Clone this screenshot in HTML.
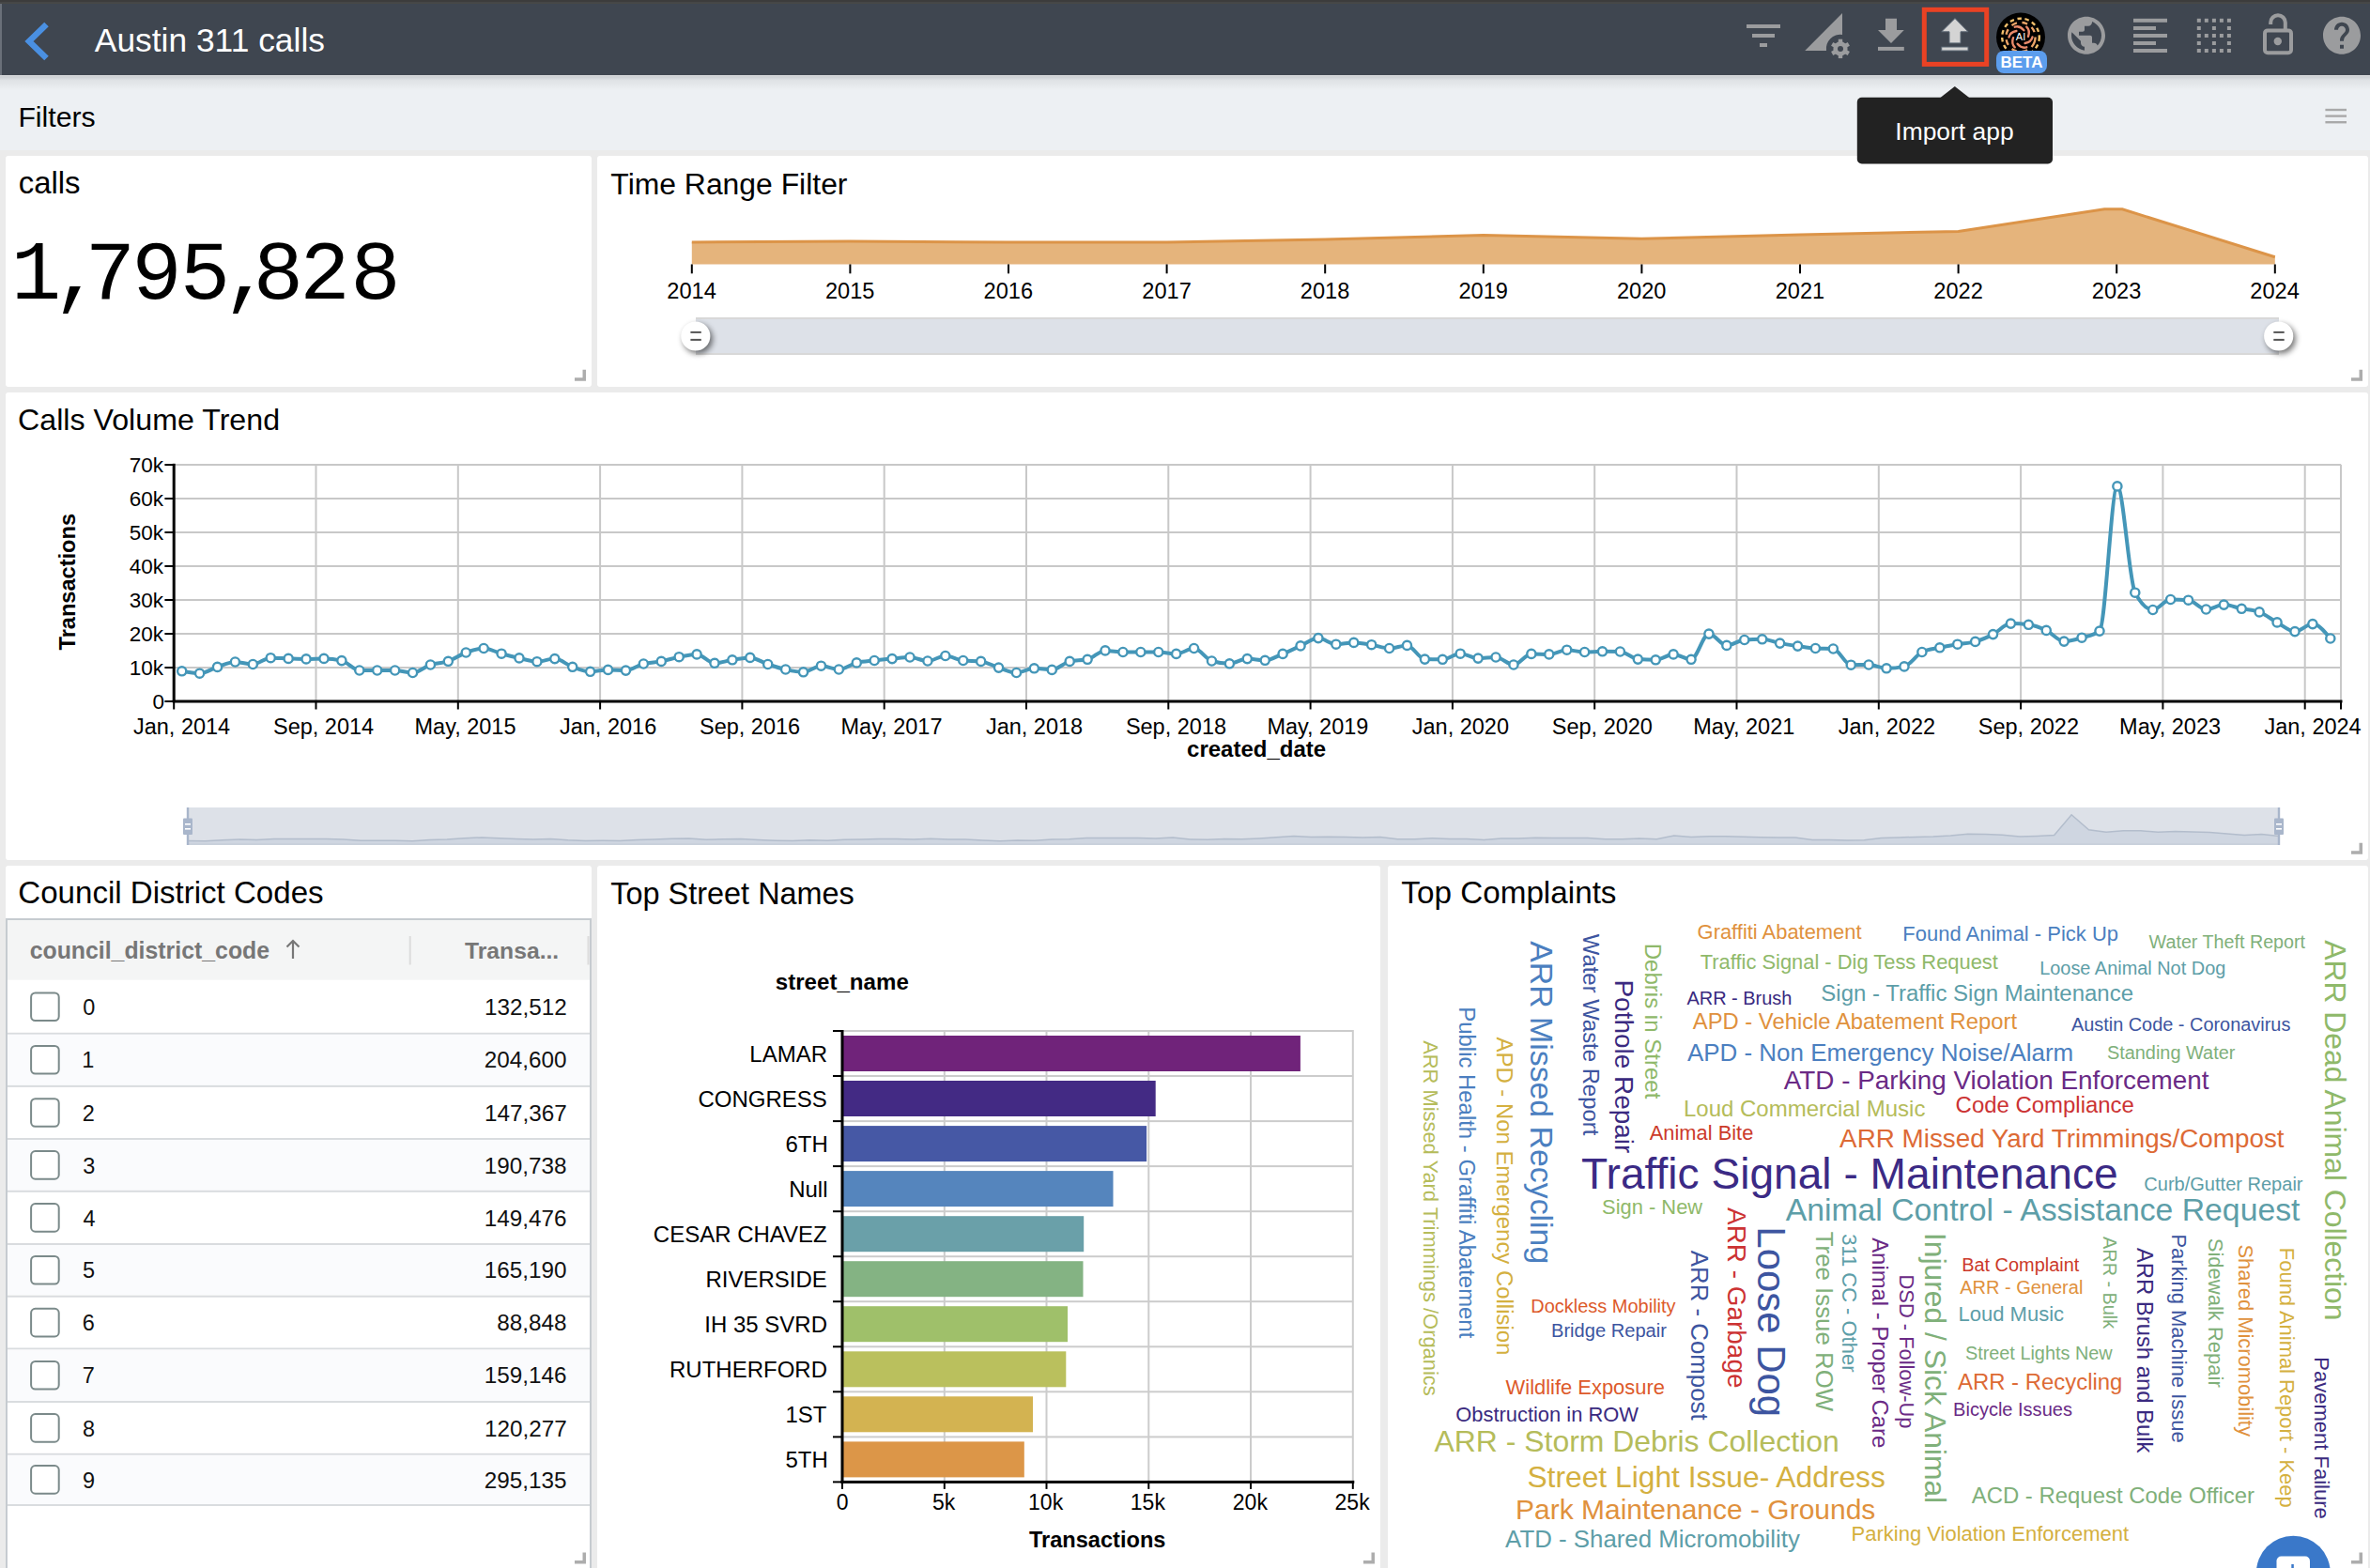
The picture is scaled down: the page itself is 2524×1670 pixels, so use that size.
<!DOCTYPE html>
<html><head><meta charset="utf-8"><title>Austin 311 calls</title>
<style>html,body{margin:0;padding:0;background:#ebebeb;overflow:hidden}svg{display:block}text{white-space:pre}</style></head>
<body>
<svg width="2524" height="1670" viewBox="0 0 2524 1670">
<defs>
<linearGradient id="hshadow" x1="0" y1="0" x2="0" y2="1"><stop offset="0" stop-color="#c2c6ca"/><stop offset="0.35" stop-color="#dfe2e5"/><stop offset="1" stop-color="#edf0f3"/></linearGradient>
<filter id="blur4" x="-50%" y="-50%" width="200%" height="200%"><feGaussianBlur stdDeviation="3"/></filter>
</defs>
<rect x="0" y="0" width="2524" height="1670" fill="#ebebeb"/>
<rect x="0" y="80" width="2524" height="80" fill="#edf0f3"/>
<rect x="0" y="80" width="2524" height="16" fill="url(#hshadow)"/>
<rect x="0" y="80" width="2524" height="1.5" fill="#d5d7d9"/>
<rect x="0" y="0" width="2524" height="80" fill="#3f4650"/>
<rect x="0" y="0" width="2524" height="2.2" fill="#3c3c3c"/><rect x="0" y="2.2" width="2524" height="1.8" fill="#474846"/><rect x="0" y="4" width="2" height="76" fill="#6a7079"/>
<path d="M49.5,26 L31,44 L49.5,62" fill="none" stroke="#4a90e2" stroke-width="6.5" stroke-linejoin="miter" stroke-linecap="butt"/>
<text x="100.80" y="54.90" font-family="Liberation Sans" font-size="35.39" fill="#ffffff">Austin 311 calls</text>
<rect x="1860" y="26" width="36" height="4" fill="#9b9c9e"/><rect x="1866" y="36" width="24" height="4" fill="#9b9c9e"/><rect x="1874" y="46" width="8" height="4" fill="#9b9c9e"/>
<path d="M1922.2,53.9 L1962,14 L1962,37 A15,15 0 0 0 1945,53.9 Z" fill="#9b9c9e"/>
<circle cx="1960" cy="51.9" r="7.6" fill="#9b9c9e"/>
<rect x="1957.8" y="41.7" width="4.4" height="5" fill="#9b9c9e" transform="rotate(0 1960 51.9)"/>
<rect x="1957.8" y="41.7" width="4.4" height="5" fill="#9b9c9e" transform="rotate(60 1960 51.9)"/>
<rect x="1957.8" y="41.7" width="4.4" height="5" fill="#9b9c9e" transform="rotate(120 1960 51.9)"/>
<rect x="1957.8" y="41.7" width="4.4" height="5" fill="#9b9c9e" transform="rotate(180 1960 51.9)"/>
<rect x="1957.8" y="41.7" width="4.4" height="5" fill="#9b9c9e" transform="rotate(240 1960 51.9)"/>
<rect x="1957.8" y="41.7" width="4.4" height="5" fill="#9b9c9e" transform="rotate(300 1960 51.9)"/>
<circle cx="1960" cy="51.9" r="3" fill="#3f4650"/>
<path d="M2008,19.8 H2020 V32.1 H2027.8 L2014,45.9 L2000,32.1 H2008 Z" fill="#9b9c9e"/><rect x="2000" y="49.9" width="27.8" height="4" fill="#9b9c9e"/>
<rect x="2049.3" y="10.3" width="66.4" height="58.1" fill="none" stroke="#ea4224" stroke-width="5"/>
<path d="M2082,19.6 L2096,33.8 H2088 V45.9 H2076 V33.8 H2067.7 Z" fill="#d4d4d4" stroke="#5a6673" stroke-width="1"/><rect x="2067.7" y="50" width="28.3" height="4" fill="#d4d4d4" stroke="#5a6673" stroke-width="1"/>
<circle cx="2152" cy="39.5" r="26" fill="#000"/>
<circle cx="2152" cy="39.5" r="19.8" fill="none" stroke="#f3c06c" stroke-width="2.4" stroke-dasharray="4.5 3.6"/>
<circle cx="2152" cy="39.5" r="15.6" fill="none" stroke="#eba467" stroke-width="2.4" stroke-dasharray="6 5.5" transform="rotate(20 2152 39.5)"/>
<path d="M2164.50,39.50 Q2163.33,44.78 2156.59,46.05" fill="none" stroke="#e98a6a" stroke-width="2.4" stroke-linecap="round"/>
<path d="M2158.25,50.33 Q2153.09,51.95 2148.62,46.75" fill="none" stroke="#e98a6a" stroke-width="2.4" stroke-linecap="round"/>
<path d="M2145.75,50.33 Q2141.76,46.67 2144.03,40.20" fill="none" stroke="#e98a6a" stroke-width="2.4" stroke-linecap="round"/>
<path d="M2139.50,39.50 Q2140.67,34.22 2147.41,32.95" fill="none" stroke="#e98a6a" stroke-width="2.4" stroke-linecap="round"/>
<path d="M2145.75,28.67 Q2150.91,27.05 2155.38,32.25" fill="none" stroke="#e98a6a" stroke-width="2.4" stroke-linecap="round"/>
<path d="M2158.25,28.67 Q2162.24,32.33 2159.97,38.80" fill="none" stroke="#e98a6a" stroke-width="2.4" stroke-linecap="round"/>
<text x="2152" y="43.3" font-family="Liberation Sans" font-size="11" fill="#fff" text-anchor="middle">AI</text>
<rect x="2126" y="54" width="54" height="24" rx="8" fill="#5c9ded"/>
<text x="2153" y="72" font-family="Liberation Sans" font-weight="bold" font-size="17" fill="#fff" text-anchor="middle">BETA</text>
<g transform="translate(2198,13.8) scale(2)" fill="#9b9c9e"><path d="M12 2C6.48 2 2 6.48 2 12s4.48 10 10 10 10-4.48 10-10S17.52 2 12 2zm-1 17.93c-3.95-.49-7-3.85-7-7.93 0-.62.08-1.21.21-1.79L9 15v1c0 1.1.9 2 2 2v1.93zm6.9-2.54c-.26-.81-1-1.39-1.9-1.39h-1v-3c0-.55-.45-1-1-1H8v-2h2c.55 0 1-.45 1-1V7h2c1.1 0 2-.9 2-2v-.41c2.93 1.19 5 4.06 5 7.41 0 2.08-.8 3.970-2.1 5.39z"/></g>
<rect x="2272" y="19.8" width="36" height="4" fill="#9b9c9e"/>
<rect x="2272" y="28" width="24" height="4" fill="#9b9c9e"/>
<rect x="2272" y="36" width="36" height="4" fill="#9b9c9e"/>
<rect x="2272" y="44" width="24" height="4" fill="#9b9c9e"/>
<rect x="2272" y="52" width="36" height="4" fill="#9b9c9e"/>
<rect x="2339.8" y="19.8" width="4" height="4" fill="#9b9c9e"/>
<rect x="2347.8" y="19.8" width="4" height="4" fill="#9b9c9e"/>
<rect x="2355.9" y="19.8" width="4" height="4" fill="#9b9c9e"/>
<rect x="2363.9" y="19.8" width="4" height="4" fill="#9b9c9e"/>
<rect x="2371.9" y="19.8" width="4" height="4" fill="#9b9c9e"/>
<rect x="2339.8" y="28" width="4" height="4" fill="#9b9c9e"/>
<rect x="2355.9" y="28" width="4" height="4" fill="#9b9c9e"/>
<rect x="2371.9" y="28" width="4" height="4" fill="#9b9c9e"/>
<rect x="2339.8" y="36" width="4" height="4" fill="#9b9c9e"/>
<rect x="2347.8" y="36" width="4" height="4" fill="#9b9c9e"/>
<rect x="2355.9" y="36" width="4" height="4" fill="#9b9c9e"/>
<rect x="2363.9" y="36" width="4" height="4" fill="#9b9c9e"/>
<rect x="2371.9" y="36" width="4" height="4" fill="#9b9c9e"/>
<rect x="2339.8" y="44" width="4" height="4" fill="#9b9c9e"/>
<rect x="2355.9" y="44" width="4" height="4" fill="#9b9c9e"/>
<rect x="2371.9" y="44" width="4" height="4" fill="#9b9c9e"/>
<rect x="2339.8" y="52" width="4" height="4" fill="#9b9c9e"/>
<rect x="2347.8" y="52" width="4" height="4" fill="#9b9c9e"/>
<rect x="2355.9" y="52" width="4" height="4" fill="#9b9c9e"/>
<rect x="2363.9" y="52" width="4" height="4" fill="#9b9c9e"/>
<rect x="2371.9" y="52" width="4" height="4" fill="#9b9c9e"/>
<path d="M2418.2,26 V24 A7.8,7.8 0 0 1 2433.8,24 V32" fill="none" stroke="#9b9c9e" stroke-width="4"/>
<rect x="2412" y="32.4" width="28" height="23.9" rx="3" fill="none" stroke="#9b9c9e" stroke-width="4"/>
<circle cx="2425.8" cy="44" r="4.2" fill="#9b9c9e"/>
<g transform="translate(2470,13.8) scale(2)" fill="#9b9c9e"><path d="M12 2C6.48 2 2 6.48 2 12s4.48 10 10 10 10-4.48 10-10S17.52 2 12 2zm1 17h-2v-2h2v2zm2.07-7.75l-.9.92C13.45 12.9 13 13.5 13 15h-2v-.5c0-1.1.45-2.1 1.17-2.830l1.24-1.26c.37-.36.59-.86.59-1.410 0-1.1-.9-2-2-2s-2 .9-2 2H8c0-2.21 1.79-4 4-4s4 1.79 4 4c0 .88-.36 1.68-.93 2.25z"/></g>
<text x="19.38" y="135.00" font-family="Liberation Sans" font-size="30.24" fill="#000">Filters</text>
<rect x="2476.4" y="115.8" width="22.6" height="2.4" fill="#a9a9a9"/><rect x="2476.4" y="122.4" width="22.6" height="2.4" fill="#a9a9a9"/><rect x="2476.4" y="129" width="22.6" height="2.4" fill="#a9a9a9"/>
<rect x="6" y="166" width="624" height="246" rx="3" fill="#fff"/>
<rect x="636" y="166" width="1886" height="246" rx="3" fill="#fff"/>
<rect x="6" y="418" width="2516" height="498" rx="3" fill="#fff"/>
<rect x="6" y="922" width="624" height="758" rx="3" fill="#fff"/>
<rect x="636" y="922" width="834" height="758" rx="3" fill="#fff"/>
<rect x="1478" y="922" width="1044" height="758" rx="3" fill="#fff"/>
<text x="19.68" y="206.00" font-family="Liberation Sans" font-size="32.95" fill="#000">calls</text>
<text x="11.76" y="318.30" font-family="Liberation Mono" font-size="89.00" fill="#000">1</text>
<text x="55.73" y="318.30" font-family="Liberation Mono" font-size="89.00" fill="#000">,</text>
<text x="90.70" y="318.30" font-family="Liberation Mono" font-size="89.00" fill="#000">7</text>
<text x="140.20" y="318.30" font-family="Liberation Mono" font-size="89.00" fill="#000">9</text>
<text x="191.70" y="318.30" font-family="Liberation Mono" font-size="89.00" fill="#000">5</text>
<text x="236.73" y="318.30" font-family="Liberation Mono" font-size="89.00" fill="#000">,</text>
<text x="269.80" y="318.30" font-family="Liberation Mono" font-size="89.00" fill="#000">8</text>
<text x="319.30" y="318.30" font-family="Liberation Mono" font-size="89.00" fill="#000">2</text>
<text x="373.20" y="318.30" font-family="Liberation Mono" font-size="89.00" fill="#000">8</text>
<path d="M612,404.05 H622.25 V393.8" fill="none" stroke="#adadad" stroke-width="3.5"/>
<text x="650.36" y="206.50" font-family="Liberation Sans" font-size="31.89" fill="#000">Time Range Filter</text>
<path d="M736.8,258.0 L905.4,257.0 L1074.0,258.0 L1242.6,258.0 L1411.2,255.0 L1579.8,250.5 L1748.4,254.3 L1917.0,250.0 L2085.6,246.5 L2241.2,222.8 L2260.2,222.8 L2422.8,273.7 L2422.8,281.5 L736.8,281.5 Z" fill="#e5b47c"/>
<path d="M736.8,258.0 L905.4,257.0 L1074.0,258.0 L1242.6,258.0 L1411.2,255.0 L1579.8,250.5 L1748.4,254.3 L1917.0,250.0 L2085.6,246.5 L2241.2,222.8 L2260.2,222.8 L2422.8,273.7" fill="none" stroke="#dc9448" stroke-width="3"/>
<rect x="735.8" y="281.5" width="2" height="9.8" fill="#000"/>
<text x="710.27" y="317.80" font-family="Liberation Sans" font-size="23.60" fill="#000">2014</text>
<rect x="904.4" y="281.5" width="2" height="9.8" fill="#000"/>
<text x="878.99" y="317.80" font-family="Liberation Sans" font-size="23.60" fill="#000">2015</text>
<rect x="1073.0" y="281.5" width="2" height="9.8" fill="#000"/>
<text x="1047.59" y="317.80" font-family="Liberation Sans" font-size="23.60" fill="#000">2016</text>
<rect x="1241.6" y="281.5" width="2" height="9.8" fill="#000"/>
<text x="1216.30" y="317.80" font-family="Liberation Sans" font-size="23.60" fill="#000">2017</text>
<rect x="1410.2" y="281.5" width="2" height="9.8" fill="#000"/>
<text x="1384.79" y="317.80" font-family="Liberation Sans" font-size="23.60" fill="#000">2018</text>
<rect x="1578.8" y="281.5" width="2" height="9.8" fill="#000"/>
<text x="1553.50" y="317.80" font-family="Liberation Sans" font-size="23.60" fill="#000">2019</text>
<rect x="1747.4" y="281.5" width="2" height="9.8" fill="#000"/>
<text x="1721.99" y="317.80" font-family="Liberation Sans" font-size="23.60" fill="#000">2020</text>
<rect x="1916.0" y="281.5" width="2" height="9.8" fill="#000"/>
<text x="1890.70" y="317.80" font-family="Liberation Sans" font-size="23.60" fill="#000">2021</text>
<rect x="2084.6" y="281.5" width="2" height="9.8" fill="#000"/>
<text x="2059.30" y="317.80" font-family="Liberation Sans" font-size="23.60" fill="#000">2022</text>
<rect x="2253.2" y="281.5" width="2" height="9.8" fill="#000"/>
<text x="2227.79" y="317.80" font-family="Liberation Sans" font-size="23.60" fill="#000">2023</text>
<rect x="2421.8" y="281.5" width="2" height="9.8" fill="#000"/>
<text x="2396.27" y="317.80" font-family="Liberation Sans" font-size="23.60" fill="#000">2024</text>
<rect x="741" y="338" width="1686" height="40" fill="#d8d8d8"/><rect x="741" y="340" width="1686" height="36" fill="#dde1e8"/>
<circle cx="743.3" cy="361" r="15.6" fill="#000" opacity="0.55" filter="url(#blur4)"/>
<circle cx="740.8" cy="358" r="15.6" fill="#fff"/>
<rect x="735.4" y="352.9" width="11.4" height="2" fill="#555"/><rect x="735.4" y="360.9" width="11.4" height="2" fill="#555"/>
<circle cx="2429.2" cy="361" r="15.6" fill="#000" opacity="0.55" filter="url(#blur4)"/>
<circle cx="2426.7" cy="358" r="15.6" fill="#fff"/>
<rect x="2421.2999999999997" y="352.9" width="11.4" height="2" fill="#555"/><rect x="2421.2999999999997" y="360.9" width="11.4" height="2" fill="#555"/>
<path d="M2504,404.05 H2514.25 V393.8" fill="none" stroke="#adadad" stroke-width="3.5"/>
<text x="19.09" y="457.70" font-family="Liberation Sans" font-size="32.19" fill="#000">Calls Volume Trend</text>
<rect x="185.2" y="710.0" width="2307.8" height="2" fill="#c8c8c8"/>
<rect x="185.2" y="674.0" width="2307.8" height="2" fill="#c8c8c8"/>
<rect x="185.2" y="638.0" width="2307.8" height="2" fill="#c8c8c8"/>
<rect x="185.2" y="602.0" width="2307.8" height="2" fill="#c8c8c8"/>
<rect x="185.2" y="566.0" width="2307.8" height="2" fill="#c8c8c8"/>
<rect x="185.2" y="530.0" width="2307.8" height="2" fill="#c8c8c8"/>
<rect x="185.2" y="494.0" width="2307.8" height="2" fill="#c8c8c8"/>
<rect x="184.2" y="494.8" width="2" height="252.2" fill="#c8c8c8"/>
<rect x="335.5" y="494.8" width="2" height="252.2" fill="#c8c8c8"/>
<rect x="486.8" y="494.8" width="2" height="252.2" fill="#c8c8c8"/>
<rect x="638.1" y="494.8" width="2" height="252.2" fill="#c8c8c8"/>
<rect x="789.4" y="494.8" width="2" height="252.2" fill="#c8c8c8"/>
<rect x="940.7" y="494.8" width="2" height="252.2" fill="#c8c8c8"/>
<rect x="1092.0" y="494.8" width="2" height="252.2" fill="#c8c8c8"/>
<rect x="1243.3" y="494.8" width="2" height="252.2" fill="#c8c8c8"/>
<rect x="1394.6" y="494.8" width="2" height="252.2" fill="#c8c8c8"/>
<rect x="1545.9" y="494.8" width="2" height="252.2" fill="#c8c8c8"/>
<rect x="1697.2" y="494.8" width="2" height="252.2" fill="#c8c8c8"/>
<rect x="1848.5" y="494.8" width="2" height="252.2" fill="#c8c8c8"/>
<rect x="1999.8" y="494.8" width="2" height="252.2" fill="#c8c8c8"/>
<rect x="2151.1" y="494.8" width="2" height="252.2" fill="#c8c8c8"/>
<rect x="2302.4" y="494.8" width="2" height="252.2" fill="#c8c8c8"/>
<rect x="2453.7" y="494.8" width="2" height="252.2" fill="#c8c8c8"/>
<rect x="2492.0" y="494.8" width="2" height="252.2" fill="#c8c8c8"/>
<rect x="183.7" y="493.8" width="3" height="253.2" fill="#000"/>
<rect x="183.7" y="745.5" width="2310.8" height="3" fill="#000"/>
<rect x="175.4" y="746.0" width="10" height="2" fill="#000"/>
<text x="162.50" y="754.60" font-family="Liberation Sans" font-size="22.50" fill="#000">0</text>
<rect x="175.4" y="710.0" width="10" height="2" fill="#000"/>
<text x="137.70" y="718.60" font-family="Liberation Sans" font-size="22.50" fill="#000">10k</text>
<rect x="175.4" y="674.0" width="10" height="2" fill="#000"/>
<text x="137.70" y="682.60" font-family="Liberation Sans" font-size="22.50" fill="#000">20k</text>
<rect x="175.4" y="638.0" width="10" height="2" fill="#000"/>
<text x="137.70" y="646.60" font-family="Liberation Sans" font-size="22.50" fill="#000">30k</text>
<rect x="175.4" y="602.0" width="10" height="2" fill="#000"/>
<text x="137.70" y="610.60" font-family="Liberation Sans" font-size="22.50" fill="#000">40k</text>
<rect x="175.4" y="566.0" width="10" height="2" fill="#000"/>
<text x="137.70" y="574.60" font-family="Liberation Sans" font-size="22.50" fill="#000">50k</text>
<rect x="175.4" y="530.0" width="10" height="2" fill="#000"/>
<text x="137.70" y="538.60" font-family="Liberation Sans" font-size="22.50" fill="#000">60k</text>
<rect x="175.4" y="494.0" width="10" height="2" fill="#000"/>
<text x="137.70" y="502.60" font-family="Liberation Sans" font-size="22.50" fill="#000">70k</text>
<rect x="184.2" y="747" width="2" height="8.5" fill="#000"/>
<text x="141.98" y="781.70" font-family="Liberation Sans" font-size="23.50" fill="#000">Jan, 2014</text>
<rect x="335.5" y="747" width="2" height="8.5" fill="#000"/>
<text x="290.96" y="781.70" font-family="Liberation Sans" font-size="23.50" fill="#000">Sep, 2014</text>
<rect x="486.8" y="747" width="2" height="8.5" fill="#000"/>
<text x="441.49" y="781.70" font-family="Liberation Sans" font-size="23.50" fill="#000">May, 2015</text>
<rect x="638.1" y="747" width="2" height="8.5" fill="#000"/>
<text x="595.99" y="781.70" font-family="Liberation Sans" font-size="23.50" fill="#000">Jan, 2016</text>
<rect x="789.4" y="747" width="2" height="8.5" fill="#000"/>
<text x="744.98" y="781.70" font-family="Liberation Sans" font-size="23.50" fill="#000">Sep, 2016</text>
<rect x="940.7" y="747" width="2" height="8.5" fill="#000"/>
<text x="895.51" y="781.70" font-family="Liberation Sans" font-size="23.50" fill="#000">May, 2017</text>
<rect x="1092.0" y="747" width="2" height="8.5" fill="#000"/>
<text x="1049.89" y="781.70" font-family="Liberation Sans" font-size="23.50" fill="#000">Jan, 2018</text>
<rect x="1243.3" y="747" width="2" height="8.5" fill="#000"/>
<text x="1198.88" y="781.70" font-family="Liberation Sans" font-size="23.50" fill="#000">Sep, 2018</text>
<rect x="1394.6" y="747" width="2" height="8.5" fill="#000"/>
<text x="1349.41" y="781.70" font-family="Liberation Sans" font-size="23.50" fill="#000">May, 2019</text>
<rect x="1545.9" y="747" width="2" height="8.5" fill="#000"/>
<text x="1503.79" y="781.70" font-family="Liberation Sans" font-size="23.50" fill="#000">Jan, 2020</text>
<rect x="1697.2" y="747" width="2" height="8.5" fill="#000"/>
<text x="1652.78" y="781.70" font-family="Liberation Sans" font-size="23.50" fill="#000">Sep, 2020</text>
<rect x="1848.5" y="747" width="2" height="8.5" fill="#000"/>
<text x="1803.31" y="781.70" font-family="Liberation Sans" font-size="23.50" fill="#000">May, 2021</text>
<rect x="1999.8" y="747" width="2" height="8.5" fill="#000"/>
<text x="1957.81" y="781.70" font-family="Liberation Sans" font-size="23.50" fill="#000">Jan, 2022</text>
<rect x="2151.1" y="747" width="2" height="8.5" fill="#000"/>
<text x="2106.80" y="781.70" font-family="Liberation Sans" font-size="23.50" fill="#000">Sep, 2022</text>
<rect x="2302.4" y="747" width="2" height="8.5" fill="#000"/>
<text x="2257.09" y="781.70" font-family="Liberation Sans" font-size="23.50" fill="#000">May, 2023</text>
<rect x="2453.7" y="747" width="2" height="8.5" fill="#000"/>
<text x="2411.48" y="781.70" font-family="Liberation Sans" font-size="23.50" fill="#000">Jan, 2024</text>
<rect x="2492.0" y="747" width="2" height="8.5" fill="#000"/>
<text x="1264.08" y="806.20" font-family="Liberation Sans" font-size="24.01" fill="#000" font-weight="bold">created_date</text>
<text transform="translate(80.40,692.48) rotate(-90)" font-family="Liberation Sans" font-size="23.60" fill="#000" font-weight="bold">Transactions</text>
<path d="M193.70,714.80 C200.00,716.00 206.31,717.20 212.61,717.20 C218.91,717.20 225.22,712.43 231.52,710.40 C237.82,708.37 244.13,705.00 250.43,705.00 C256.73,705.00 263.04,707.50 269.34,707.50 C275.64,707.50 281.95,700.70 288.25,700.70 C294.55,700.70 300.86,701.20 307.16,701.40 C313.46,701.60 319.77,701.90 326.07,701.90 C332.37,701.90 338.68,701.40 344.98,701.40 C351.28,701.40 357.59,702.13 363.89,703.60 C370.19,705.07 376.50,714.00 382.80,714.00 C389.10,714.00 395.41,714.00 401.71,714.00 C408.01,714.00 414.32,714.00 420.62,714.00 C426.92,714.00 433.23,716.50 439.53,716.50 C445.83,716.50 452.14,710.03 458.44,708.00 C464.74,705.97 471.05,706.47 477.35,704.30 C483.65,702.13 489.96,697.30 496.26,695.00 C502.56,692.70 508.87,690.50 515.17,690.50 C521.47,690.50 527.78,694.47 534.08,696.20 C540.38,697.93 546.69,699.48 552.99,700.90 C559.29,702.32 565.60,704.70 571.90,704.70 C578.20,704.70 584.51,701.60 590.81,701.60 C597.11,701.60 603.42,708.02 609.72,710.30 C616.02,712.58 622.33,715.30 628.63,715.30 C634.93,715.30 641.24,713.40 647.54,713.40 C653.84,713.40 660.15,714.10 666.45,714.10 C672.75,714.10 679.06,708.62 685.36,707.00 C691.66,705.38 697.97,705.62 704.27,704.40 C710.57,703.18 716.88,700.95 723.18,699.70 C729.48,698.45 735.79,696.90 742.09,696.90 C748.39,696.90 754.70,706.30 761.00,706.30 C767.30,706.30 773.61,703.78 779.91,702.80 C786.21,701.82 792.52,700.40 798.82,700.40 C805.12,700.40 811.43,705.40 817.73,707.50 C824.03,709.60 830.34,711.62 836.64,713.00 C842.94,714.38 849.25,715.80 855.55,715.80 C861.85,715.80 868.16,709.20 874.46,709.20 C880.76,709.20 887.07,713.00 893.37,713.00 C899.67,713.00 905.98,707.48 912.28,705.90 C918.58,704.32 924.89,704.22 931.19,703.50 C937.49,702.78 943.80,702.18 950.10,701.60 C956.40,701.02 962.71,700.00 969.01,700.00 C975.31,700.00 981.62,704.00 987.92,704.00 C994.22,704.00 1000.53,698.50 1006.83,698.50 C1013.13,698.50 1019.44,702.90 1025.74,703.50 C1032.04,704.10 1038.35,703.80 1044.65,704.40 C1050.95,705.00 1057.26,709.08 1063.56,711.10 C1069.86,713.12 1076.17,716.50 1082.47,716.50 C1088.77,716.50 1095.08,711.80 1101.38,711.80 C1107.68,711.80 1113.99,713.40 1120.29,713.40 C1126.59,713.40 1132.90,705.80 1139.20,704.40 C1145.50,703.00 1151.81,703.70 1158.11,702.30 C1164.41,700.90 1170.72,692.90 1177.02,692.90 C1183.32,692.90 1189.63,694.50 1195.93,694.50 C1202.23,694.50 1208.54,694.50 1214.84,694.50 C1221.14,694.50 1227.45,694.50 1233.75,694.50 C1240.05,694.50 1246.36,696.40 1252.66,696.40 C1258.96,696.40 1265.27,690.50 1271.57,690.50 C1277.87,690.50 1284.18,702.13 1290.48,704.00 C1296.78,705.87 1303.09,706.80 1309.39,706.80 C1315.69,706.80 1322.00,701.60 1328.30,701.60 C1334.60,701.60 1340.91,703.30 1347.21,703.30 C1353.51,703.30 1359.82,698.97 1366.12,696.40 C1372.42,693.83 1378.73,690.70 1385.03,687.90 C1391.33,685.10 1397.64,679.60 1403.94,679.60 C1410.24,679.60 1416.55,686.20 1422.85,686.20 C1429.15,686.20 1435.46,684.40 1441.76,684.40 C1448.06,684.40 1454.37,685.68 1460.67,686.70 C1466.97,687.72 1473.28,690.50 1479.58,690.50 C1485.88,690.50 1492.19,687.40 1498.49,687.40 C1504.79,687.40 1511.10,701.97 1517.40,702.10 C1523.70,702.23 1530.01,702.30 1536.31,702.30 C1542.61,702.30 1548.92,696.20 1555.22,696.20 C1561.52,696.20 1567.83,701.10 1574.13,701.10 C1580.43,701.10 1586.74,700.00 1593.04,700.00 C1599.34,700.00 1605.65,708.00 1611.95,708.00 C1618.25,708.00 1624.56,696.40 1630.86,696.40 C1637.16,696.40 1643.47,696.90 1649.77,696.90 C1656.07,696.90 1662.38,692.20 1668.68,692.20 C1674.98,692.20 1681.29,694.50 1687.59,694.50 C1693.89,694.50 1700.20,693.80 1706.50,693.80 C1712.80,693.80 1719.11,693.87 1725.41,694.00 C1731.71,694.13 1738.02,701.63 1744.32,702.10 C1750.62,702.57 1756.93,702.80 1763.23,702.80 C1769.53,702.80 1775.84,696.90 1782.14,696.90 C1788.44,696.90 1794.75,702.30 1801.05,702.30 C1807.35,702.30 1813.66,675.10 1819.96,675.10 C1826.26,675.10 1832.57,687.40 1838.87,687.40 C1845.17,687.40 1851.48,681.97 1857.78,681.50 C1864.08,681.03 1870.39,680.80 1876.69,680.80 C1882.99,680.80 1889.30,683.88 1895.60,685.10 C1901.90,686.32 1908.21,687.20 1914.51,688.10 C1920.81,689.00 1927.12,690.17 1933.42,690.50 C1939.72,690.83 1946.03,690.67 1952.33,691.00 C1958.63,691.33 1964.94,708.20 1971.24,708.20 C1977.54,708.20 1983.85,708.00 1990.15,708.00 C1996.45,708.00 2002.76,711.80 2009.06,711.80 C2015.36,711.80 2021.67,711.17 2027.97,709.90 C2034.27,708.63 2040.58,697.63 2046.88,694.50 C2053.18,691.37 2059.49,691.18 2065.79,689.80 C2072.09,688.42 2078.40,687.27 2084.70,686.20 C2091.00,685.13 2097.31,685.17 2103.61,683.40 C2109.91,681.63 2116.22,678.82 2122.52,675.60 C2128.82,672.38 2135.13,664.10 2141.43,664.10 C2147.73,664.10 2154.04,664.50 2160.34,665.30 C2166.64,666.10 2172.95,668.43 2179.25,671.40 C2185.55,674.37 2191.86,683.10 2198.16,683.10 C2204.46,683.10 2210.77,681.03 2217.07,679.20 C2223.37,677.37 2229.68,676.83 2235.98,672.10 C2242.28,667.37 2248.59,517.90 2254.89,517.90 C2261.19,517.90 2267.50,619.00 2273.80,631.20 C2280.10,643.40 2286.41,649.50 2292.71,649.50 C2299.01,649.50 2305.32,638.50 2311.62,638.50 C2317.92,638.50 2324.23,638.73 2330.53,639.20 C2336.83,639.67 2343.14,649.00 2349.44,649.00 C2355.74,649.00 2362.05,644.10 2368.35,644.10 C2374.65,644.10 2380.96,647.00 2387.26,648.30 C2393.56,649.60 2399.87,649.50 2406.17,651.90 C2412.47,654.30 2418.78,659.45 2425.08,662.90 C2431.38,666.35 2437.69,672.60 2443.99,672.60 C2450.29,672.60 2456.60,664.60 2462.90,664.60 C2469.20,664.60 2475.51,672.30 2481.81,680.00" fill="none" stroke="#4496b8" stroke-width="4"/>
<circle cx="193.70" cy="714.80" r="4.6" fill="#fff" stroke="#4496b8" stroke-width="2.4"/>
<circle cx="212.61" cy="717.20" r="4.6" fill="#fff" stroke="#4496b8" stroke-width="2.4"/>
<circle cx="231.52" cy="710.40" r="4.6" fill="#fff" stroke="#4496b8" stroke-width="2.4"/>
<circle cx="250.43" cy="705.00" r="4.6" fill="#fff" stroke="#4496b8" stroke-width="2.4"/>
<circle cx="269.34" cy="707.50" r="4.6" fill="#fff" stroke="#4496b8" stroke-width="2.4"/>
<circle cx="288.25" cy="700.70" r="4.6" fill="#fff" stroke="#4496b8" stroke-width="2.4"/>
<circle cx="307.16" cy="701.40" r="4.6" fill="#fff" stroke="#4496b8" stroke-width="2.4"/>
<circle cx="326.07" cy="701.90" r="4.6" fill="#fff" stroke="#4496b8" stroke-width="2.4"/>
<circle cx="344.98" cy="701.40" r="4.6" fill="#fff" stroke="#4496b8" stroke-width="2.4"/>
<circle cx="363.89" cy="703.60" r="4.6" fill="#fff" stroke="#4496b8" stroke-width="2.4"/>
<circle cx="382.80" cy="714.00" r="4.6" fill="#fff" stroke="#4496b8" stroke-width="2.4"/>
<circle cx="401.71" cy="714.00" r="4.6" fill="#fff" stroke="#4496b8" stroke-width="2.4"/>
<circle cx="420.62" cy="714.00" r="4.6" fill="#fff" stroke="#4496b8" stroke-width="2.4"/>
<circle cx="439.53" cy="716.50" r="4.6" fill="#fff" stroke="#4496b8" stroke-width="2.4"/>
<circle cx="458.44" cy="708.00" r="4.6" fill="#fff" stroke="#4496b8" stroke-width="2.4"/>
<circle cx="477.35" cy="704.30" r="4.6" fill="#fff" stroke="#4496b8" stroke-width="2.4"/>
<circle cx="496.26" cy="695.00" r="4.6" fill="#fff" stroke="#4496b8" stroke-width="2.4"/>
<circle cx="515.17" cy="690.50" r="4.6" fill="#fff" stroke="#4496b8" stroke-width="2.4"/>
<circle cx="534.08" cy="696.20" r="4.6" fill="#fff" stroke="#4496b8" stroke-width="2.4"/>
<circle cx="552.99" cy="700.90" r="4.6" fill="#fff" stroke="#4496b8" stroke-width="2.4"/>
<circle cx="571.90" cy="704.70" r="4.6" fill="#fff" stroke="#4496b8" stroke-width="2.4"/>
<circle cx="590.81" cy="701.60" r="4.6" fill="#fff" stroke="#4496b8" stroke-width="2.4"/>
<circle cx="609.72" cy="710.30" r="4.6" fill="#fff" stroke="#4496b8" stroke-width="2.4"/>
<circle cx="628.63" cy="715.30" r="4.6" fill="#fff" stroke="#4496b8" stroke-width="2.4"/>
<circle cx="647.54" cy="713.40" r="4.6" fill="#fff" stroke="#4496b8" stroke-width="2.4"/>
<circle cx="666.45" cy="714.10" r="4.6" fill="#fff" stroke="#4496b8" stroke-width="2.4"/>
<circle cx="685.36" cy="707.00" r="4.6" fill="#fff" stroke="#4496b8" stroke-width="2.4"/>
<circle cx="704.27" cy="704.40" r="4.6" fill="#fff" stroke="#4496b8" stroke-width="2.4"/>
<circle cx="723.18" cy="699.70" r="4.6" fill="#fff" stroke="#4496b8" stroke-width="2.4"/>
<circle cx="742.09" cy="696.90" r="4.6" fill="#fff" stroke="#4496b8" stroke-width="2.4"/>
<circle cx="761.00" cy="706.30" r="4.6" fill="#fff" stroke="#4496b8" stroke-width="2.4"/>
<circle cx="779.91" cy="702.80" r="4.6" fill="#fff" stroke="#4496b8" stroke-width="2.4"/>
<circle cx="798.82" cy="700.40" r="4.6" fill="#fff" stroke="#4496b8" stroke-width="2.4"/>
<circle cx="817.73" cy="707.50" r="4.6" fill="#fff" stroke="#4496b8" stroke-width="2.4"/>
<circle cx="836.64" cy="713.00" r="4.6" fill="#fff" stroke="#4496b8" stroke-width="2.4"/>
<circle cx="855.55" cy="715.80" r="4.6" fill="#fff" stroke="#4496b8" stroke-width="2.4"/>
<circle cx="874.46" cy="709.20" r="4.6" fill="#fff" stroke="#4496b8" stroke-width="2.4"/>
<circle cx="893.37" cy="713.00" r="4.6" fill="#fff" stroke="#4496b8" stroke-width="2.4"/>
<circle cx="912.28" cy="705.90" r="4.6" fill="#fff" stroke="#4496b8" stroke-width="2.4"/>
<circle cx="931.19" cy="703.50" r="4.6" fill="#fff" stroke="#4496b8" stroke-width="2.4"/>
<circle cx="950.10" cy="701.60" r="4.6" fill="#fff" stroke="#4496b8" stroke-width="2.4"/>
<circle cx="969.01" cy="700.00" r="4.6" fill="#fff" stroke="#4496b8" stroke-width="2.4"/>
<circle cx="987.92" cy="704.00" r="4.6" fill="#fff" stroke="#4496b8" stroke-width="2.4"/>
<circle cx="1006.83" cy="698.50" r="4.6" fill="#fff" stroke="#4496b8" stroke-width="2.4"/>
<circle cx="1025.74" cy="703.50" r="4.6" fill="#fff" stroke="#4496b8" stroke-width="2.4"/>
<circle cx="1044.65" cy="704.40" r="4.6" fill="#fff" stroke="#4496b8" stroke-width="2.4"/>
<circle cx="1063.56" cy="711.10" r="4.6" fill="#fff" stroke="#4496b8" stroke-width="2.4"/>
<circle cx="1082.47" cy="716.50" r="4.6" fill="#fff" stroke="#4496b8" stroke-width="2.4"/>
<circle cx="1101.38" cy="711.80" r="4.6" fill="#fff" stroke="#4496b8" stroke-width="2.4"/>
<circle cx="1120.29" cy="713.40" r="4.6" fill="#fff" stroke="#4496b8" stroke-width="2.4"/>
<circle cx="1139.20" cy="704.40" r="4.6" fill="#fff" stroke="#4496b8" stroke-width="2.4"/>
<circle cx="1158.11" cy="702.30" r="4.6" fill="#fff" stroke="#4496b8" stroke-width="2.4"/>
<circle cx="1177.02" cy="692.90" r="4.6" fill="#fff" stroke="#4496b8" stroke-width="2.4"/>
<circle cx="1195.93" cy="694.50" r="4.6" fill="#fff" stroke="#4496b8" stroke-width="2.4"/>
<circle cx="1214.84" cy="694.50" r="4.6" fill="#fff" stroke="#4496b8" stroke-width="2.4"/>
<circle cx="1233.75" cy="694.50" r="4.6" fill="#fff" stroke="#4496b8" stroke-width="2.4"/>
<circle cx="1252.66" cy="696.40" r="4.6" fill="#fff" stroke="#4496b8" stroke-width="2.4"/>
<circle cx="1271.57" cy="690.50" r="4.6" fill="#fff" stroke="#4496b8" stroke-width="2.4"/>
<circle cx="1290.48" cy="704.00" r="4.6" fill="#fff" stroke="#4496b8" stroke-width="2.4"/>
<circle cx="1309.39" cy="706.80" r="4.6" fill="#fff" stroke="#4496b8" stroke-width="2.4"/>
<circle cx="1328.30" cy="701.60" r="4.6" fill="#fff" stroke="#4496b8" stroke-width="2.4"/>
<circle cx="1347.21" cy="703.30" r="4.6" fill="#fff" stroke="#4496b8" stroke-width="2.4"/>
<circle cx="1366.12" cy="696.40" r="4.6" fill="#fff" stroke="#4496b8" stroke-width="2.4"/>
<circle cx="1385.03" cy="687.90" r="4.6" fill="#fff" stroke="#4496b8" stroke-width="2.4"/>
<circle cx="1403.94" cy="679.60" r="4.6" fill="#fff" stroke="#4496b8" stroke-width="2.4"/>
<circle cx="1422.85" cy="686.20" r="4.6" fill="#fff" stroke="#4496b8" stroke-width="2.4"/>
<circle cx="1441.76" cy="684.40" r="4.6" fill="#fff" stroke="#4496b8" stroke-width="2.4"/>
<circle cx="1460.67" cy="686.70" r="4.6" fill="#fff" stroke="#4496b8" stroke-width="2.4"/>
<circle cx="1479.58" cy="690.50" r="4.6" fill="#fff" stroke="#4496b8" stroke-width="2.4"/>
<circle cx="1498.49" cy="687.40" r="4.6" fill="#fff" stroke="#4496b8" stroke-width="2.4"/>
<circle cx="1517.40" cy="702.10" r="4.6" fill="#fff" stroke="#4496b8" stroke-width="2.4"/>
<circle cx="1536.31" cy="702.30" r="4.6" fill="#fff" stroke="#4496b8" stroke-width="2.4"/>
<circle cx="1555.22" cy="696.20" r="4.6" fill="#fff" stroke="#4496b8" stroke-width="2.4"/>
<circle cx="1574.13" cy="701.10" r="4.6" fill="#fff" stroke="#4496b8" stroke-width="2.4"/>
<circle cx="1593.04" cy="700.00" r="4.6" fill="#fff" stroke="#4496b8" stroke-width="2.4"/>
<circle cx="1611.95" cy="708.00" r="4.6" fill="#fff" stroke="#4496b8" stroke-width="2.4"/>
<circle cx="1630.86" cy="696.40" r="4.6" fill="#fff" stroke="#4496b8" stroke-width="2.4"/>
<circle cx="1649.77" cy="696.90" r="4.6" fill="#fff" stroke="#4496b8" stroke-width="2.4"/>
<circle cx="1668.68" cy="692.20" r="4.6" fill="#fff" stroke="#4496b8" stroke-width="2.4"/>
<circle cx="1687.59" cy="694.50" r="4.6" fill="#fff" stroke="#4496b8" stroke-width="2.4"/>
<circle cx="1706.50" cy="693.80" r="4.6" fill="#fff" stroke="#4496b8" stroke-width="2.4"/>
<circle cx="1725.41" cy="694.00" r="4.6" fill="#fff" stroke="#4496b8" stroke-width="2.4"/>
<circle cx="1744.32" cy="702.10" r="4.6" fill="#fff" stroke="#4496b8" stroke-width="2.4"/>
<circle cx="1763.23" cy="702.80" r="4.6" fill="#fff" stroke="#4496b8" stroke-width="2.4"/>
<circle cx="1782.14" cy="696.90" r="4.6" fill="#fff" stroke="#4496b8" stroke-width="2.4"/>
<circle cx="1801.05" cy="702.30" r="4.6" fill="#fff" stroke="#4496b8" stroke-width="2.4"/>
<circle cx="1819.96" cy="675.10" r="4.6" fill="#fff" stroke="#4496b8" stroke-width="2.4"/>
<circle cx="1838.87" cy="687.40" r="4.6" fill="#fff" stroke="#4496b8" stroke-width="2.4"/>
<circle cx="1857.78" cy="681.50" r="4.6" fill="#fff" stroke="#4496b8" stroke-width="2.4"/>
<circle cx="1876.69" cy="680.80" r="4.6" fill="#fff" stroke="#4496b8" stroke-width="2.4"/>
<circle cx="1895.60" cy="685.10" r="4.6" fill="#fff" stroke="#4496b8" stroke-width="2.4"/>
<circle cx="1914.51" cy="688.10" r="4.6" fill="#fff" stroke="#4496b8" stroke-width="2.4"/>
<circle cx="1933.42" cy="690.50" r="4.6" fill="#fff" stroke="#4496b8" stroke-width="2.4"/>
<circle cx="1952.33" cy="691.00" r="4.6" fill="#fff" stroke="#4496b8" stroke-width="2.4"/>
<circle cx="1971.24" cy="708.20" r="4.6" fill="#fff" stroke="#4496b8" stroke-width="2.4"/>
<circle cx="1990.15" cy="708.00" r="4.6" fill="#fff" stroke="#4496b8" stroke-width="2.4"/>
<circle cx="2009.06" cy="711.80" r="4.6" fill="#fff" stroke="#4496b8" stroke-width="2.4"/>
<circle cx="2027.97" cy="709.90" r="4.6" fill="#fff" stroke="#4496b8" stroke-width="2.4"/>
<circle cx="2046.88" cy="694.50" r="4.6" fill="#fff" stroke="#4496b8" stroke-width="2.4"/>
<circle cx="2065.79" cy="689.80" r="4.6" fill="#fff" stroke="#4496b8" stroke-width="2.4"/>
<circle cx="2084.70" cy="686.20" r="4.6" fill="#fff" stroke="#4496b8" stroke-width="2.4"/>
<circle cx="2103.61" cy="683.40" r="4.6" fill="#fff" stroke="#4496b8" stroke-width="2.4"/>
<circle cx="2122.52" cy="675.60" r="4.6" fill="#fff" stroke="#4496b8" stroke-width="2.4"/>
<circle cx="2141.43" cy="664.10" r="4.6" fill="#fff" stroke="#4496b8" stroke-width="2.4"/>
<circle cx="2160.34" cy="665.30" r="4.6" fill="#fff" stroke="#4496b8" stroke-width="2.4"/>
<circle cx="2179.25" cy="671.40" r="4.6" fill="#fff" stroke="#4496b8" stroke-width="2.4"/>
<circle cx="2198.16" cy="683.10" r="4.6" fill="#fff" stroke="#4496b8" stroke-width="2.4"/>
<circle cx="2217.07" cy="679.20" r="4.6" fill="#fff" stroke="#4496b8" stroke-width="2.4"/>
<circle cx="2235.98" cy="672.10" r="4.6" fill="#fff" stroke="#4496b8" stroke-width="2.4"/>
<circle cx="2254.89" cy="517.90" r="4.6" fill="#fff" stroke="#4496b8" stroke-width="2.4"/>
<circle cx="2273.80" cy="631.20" r="4.6" fill="#fff" stroke="#4496b8" stroke-width="2.4"/>
<circle cx="2292.71" cy="649.50" r="4.6" fill="#fff" stroke="#4496b8" stroke-width="2.4"/>
<circle cx="2311.62" cy="638.50" r="4.6" fill="#fff" stroke="#4496b8" stroke-width="2.4"/>
<circle cx="2330.53" cy="639.20" r="4.6" fill="#fff" stroke="#4496b8" stroke-width="2.4"/>
<circle cx="2349.44" cy="649.00" r="4.6" fill="#fff" stroke="#4496b8" stroke-width="2.4"/>
<circle cx="2368.35" cy="644.10" r="4.6" fill="#fff" stroke="#4496b8" stroke-width="2.4"/>
<circle cx="2387.26" cy="648.30" r="4.6" fill="#fff" stroke="#4496b8" stroke-width="2.4"/>
<circle cx="2406.17" cy="651.90" r="4.6" fill="#fff" stroke="#4496b8" stroke-width="2.4"/>
<circle cx="2425.08" cy="662.90" r="4.6" fill="#fff" stroke="#4496b8" stroke-width="2.4"/>
<circle cx="2443.99" cy="672.60" r="4.6" fill="#fff" stroke="#4496b8" stroke-width="2.4"/>
<circle cx="2462.90" cy="664.60" r="4.6" fill="#fff" stroke="#4496b8" stroke-width="2.4"/>
<circle cx="2481.81" cy="680.00" r="4.6" fill="#fff" stroke="#4496b8" stroke-width="2.4"/>
<rect x="200" y="860" width="2227" height="40" fill="#dde1e8"/>
<path d="M200.0,895.5 L218.4,895.8 L236.8,894.8 L255.2,894.1 L273.6,894.4 L292.0,893.5 L310.4,893.6 L328.8,893.6 L347.2,893.6 L365.6,893.9 L384.0,895.3 L402.5,895.3 L420.9,895.3 L439.3,895.7 L457.7,894.5 L476.1,894.0 L494.5,892.7 L512.9,892.0 L531.3,892.8 L549.7,893.5 L568.1,894.0 L586.5,893.6 L604.9,894.8 L623.3,895.5 L641.7,895.3 L660.1,895.4 L678.5,894.4 L696.9,894.0 L715.3,893.3 L733.7,892.9 L752.1,894.3 L770.6,893.8 L789.0,893.4 L807.4,894.4 L825.8,895.2 L844.2,895.6 L862.6,894.7 L881.0,895.2 L899.4,894.2 L917.8,893.9 L936.2,893.6 L954.6,893.4 L973.0,893.9 L991.4,893.2 L1009.8,893.9 L1028.2,894.0 L1046.6,894.9 L1065.0,895.7 L1083.4,895.0 L1101.8,895.3 L1120.2,894.0 L1138.7,893.7 L1157.1,892.4 L1175.5,892.6 L1193.9,892.6 L1212.3,892.6 L1230.7,892.9 L1249.1,892.0 L1267.5,893.9 L1285.9,894.3 L1304.3,893.6 L1322.7,893.8 L1341.1,892.9 L1359.5,891.7 L1377.9,890.5 L1396.3,891.4 L1414.7,891.2 L1433.1,891.5 L1451.5,892.0 L1469.9,891.6 L1488.3,893.7 L1506.8,893.7 L1525.2,892.8 L1543.6,893.5 L1562.0,893.4 L1580.4,894.5 L1598.8,892.9 L1617.2,892.9 L1635.6,892.3 L1654.0,892.6 L1672.4,892.5 L1690.8,892.5 L1709.2,893.7 L1727.6,893.8 L1746.0,892.9 L1764.4,893.7 L1782.8,889.9 L1801.2,891.6 L1819.6,890.8 L1838.0,890.7 L1856.4,891.3 L1874.9,891.7 L1893.3,892.0 L1911.7,892.1 L1930.1,894.5 L1948.5,894.5 L1966.9,895.0 L1985.3,894.8 L2003.7,892.6 L2022.1,891.9 L2040.5,891.4 L2058.9,891.0 L2077.3,889.9 L2095.7,888.3 L2114.1,888.5 L2132.5,889.3 L2150.9,891.0 L2169.3,890.4 L2187.7,889.4 L2206.1,867.7 L2224.5,883.7 L2243.0,886.2 L2261.4,884.7 L2279.8,884.8 L2298.2,886.2 L2316.6,885.5 L2335.0,886.1 L2353.4,886.6 L2371.8,888.1 L2390.2,889.5 L2408.6,888.4 L2427.0,890.5 L2427,900 L200,900 Z" fill="#cfd6e1" stroke="none"/>
<path d="M200.0,895.5 L218.4,895.8 L236.8,894.8 L255.2,894.1 L273.6,894.4 L292.0,893.5 L310.4,893.6 L328.8,893.6 L347.2,893.6 L365.6,893.9 L384.0,895.3 L402.5,895.3 L420.9,895.3 L439.3,895.7 L457.7,894.5 L476.1,894.0 L494.5,892.7 L512.9,892.0 L531.3,892.8 L549.7,893.5 L568.1,894.0 L586.5,893.6 L604.9,894.8 L623.3,895.5 L641.7,895.3 L660.1,895.4 L678.5,894.4 L696.9,894.0 L715.3,893.3 L733.7,892.9 L752.1,894.3 L770.6,893.8 L789.0,893.4 L807.4,894.4 L825.8,895.2 L844.2,895.6 L862.6,894.7 L881.0,895.2 L899.4,894.2 L917.8,893.9 L936.2,893.6 L954.6,893.4 L973.0,893.9 L991.4,893.2 L1009.8,893.9 L1028.2,894.0 L1046.6,894.9 L1065.0,895.7 L1083.4,895.0 L1101.8,895.3 L1120.2,894.0 L1138.7,893.7 L1157.1,892.4 L1175.5,892.6 L1193.9,892.6 L1212.3,892.6 L1230.7,892.9 L1249.1,892.0 L1267.5,893.9 L1285.9,894.3 L1304.3,893.6 L1322.7,893.8 L1341.1,892.9 L1359.5,891.7 L1377.9,890.5 L1396.3,891.4 L1414.7,891.2 L1433.1,891.5 L1451.5,892.0 L1469.9,891.6 L1488.3,893.7 L1506.8,893.7 L1525.2,892.8 L1543.6,893.5 L1562.0,893.4 L1580.4,894.5 L1598.8,892.9 L1617.2,892.9 L1635.6,892.3 L1654.0,892.6 L1672.4,892.5 L1690.8,892.5 L1709.2,893.7 L1727.6,893.8 L1746.0,892.9 L1764.4,893.7 L1782.8,889.9 L1801.2,891.6 L1819.6,890.8 L1838.0,890.7 L1856.4,891.3 L1874.9,891.7 L1893.3,892.0 L1911.7,892.1 L1930.1,894.5 L1948.5,894.5 L1966.9,895.0 L1985.3,894.8 L2003.7,892.6 L2022.1,891.9 L2040.5,891.4 L2058.9,891.0 L2077.3,889.9 L2095.7,888.3 L2114.1,888.5 L2132.5,889.3 L2150.9,891.0 L2169.3,890.4 L2187.7,889.4 L2206.1,867.7 L2224.5,883.7 L2243.0,886.2 L2261.4,884.7 L2279.8,884.8 L2298.2,886.2 L2316.6,885.5 L2335.0,886.1 L2353.4,886.6 L2371.8,888.1 L2390.2,889.5 L2408.6,888.4 L2427.0,890.5" fill="none" stroke="#b3bdcc" stroke-width="1.5"/>
<rect x="200" y="898" width="2227" height="2" fill="#c9d0db"/>
<rect x="198.8" y="860" width="2.4" height="40" fill="#a9b6cb"/>
<rect x="195" y="871.5" width="10" height="17.5" rx="1" fill="#a9b6cb"/>
<rect x="197" y="877" width="6" height="1.6" fill="#fff"/><rect x="197" y="882" width="6" height="1.6" fill="#fff"/>
<rect x="2425.8" y="860" width="2.4" height="40" fill="#a9b6cb"/>
<rect x="2422" y="871.5" width="10" height="17.5" rx="1" fill="#a9b6cb"/>
<rect x="2424" y="877" width="6" height="1.6" fill="#fff"/><rect x="2424" y="882" width="6" height="1.6" fill="#fff"/>
<path d="M2504,907.95 H2514.25 V897.7" fill="none" stroke="#adadad" stroke-width="3.5"/>
<text x="19.35" y="962.40" font-family="Liberation Sans" font-size="33.07" fill="#000">Council District Codes</text>
<rect x="7" y="979" width="622" height="720" fill="#fff" stroke="#c6cbd0" stroke-width="2"/>
<rect x="8" y="980" width="620" height="63.7" fill="#f4f5f5"/>
<text x="31.65" y="1021.30" font-family="Liberation Sans" font-size="24.85" fill="#777" font-weight="bold">council_district_code</text>
<path d="M312,1002 V1021 M305.5,1008.5 L312,1002 L318.5,1008.5" fill="none" stroke="#777" stroke-width="2.2"/>
<rect x="435.7" y="997" width="2" height="30.5" fill="#dcdcdc"/>
<rect x="625.5" y="997" width="2" height="30.5" fill="#dcdcdc"/>
<text x="495.05" y="1021.30" font-family="Liberation Sans" font-size="24.70" fill="#777" font-weight="bold">Transa...</text>
<rect x="8" y="1099.8" width="620" height="2" fill="#d9dcdf"/>
<rect x="33.1" y="1057.5" width="29.6" height="29.6" rx="4.5" fill="#fff" stroke="#7b8a8a" stroke-width="2"/>
<text x="88.30" y="1080.85" font-family="Liberation Sans" font-size="23.50" fill="#111">0</text>
<text x="515.98" y="1080.85" font-family="Liberation Sans" font-size="24.30" fill="#111">132,512</text>
<rect x="8" y="1101.8" width="620" height="54.1" fill="#fafbfd"/>
<rect x="8" y="1155.9" width="620" height="2" fill="#d9dcdf"/>
<rect x="33.1" y="1114.0" width="29.6" height="29.6" rx="4.5" fill="#fff" stroke="#7b8a8a" stroke-width="2"/>
<text x="87.36" y="1137.45" font-family="Liberation Sans" font-size="23.50" fill="#111">1</text>
<text x="515.74" y="1137.45" font-family="Liberation Sans" font-size="24.30" fill="#111">204,600</text>
<rect x="8" y="1212.0" width="620" height="2" fill="#d9dcdf"/>
<rect x="33.1" y="1170.2" width="29.6" height="29.6" rx="4.5" fill="#fff" stroke="#7b8a8a" stroke-width="2"/>
<text x="87.83" y="1193.55" font-family="Liberation Sans" font-size="23.50" fill="#111">2</text>
<text x="515.98" y="1193.55" font-family="Liberation Sans" font-size="24.30" fill="#111">147,367</text>
<rect x="8" y="1214.0" width="620" height="53.8" fill="#fafbfd"/>
<rect x="8" y="1267.8" width="620" height="2" fill="#d9dcdf"/>
<rect x="33.1" y="1226.1" width="29.6" height="29.6" rx="4.5" fill="#fff" stroke="#7b8a8a" stroke-width="2"/>
<text x="88.30" y="1249.50" font-family="Liberation Sans" font-size="23.50" fill="#111">3</text>
<text x="515.74" y="1249.50" font-family="Liberation Sans" font-size="24.30" fill="#111">190,738</text>
<rect x="8" y="1324.0" width="620" height="2" fill="#d9dcdf"/>
<rect x="33.1" y="1282.1" width="29.6" height="29.6" rx="4.5" fill="#fff" stroke="#7b8a8a" stroke-width="2"/>
<text x="88.53" y="1305.50" font-family="Liberation Sans" font-size="23.50" fill="#111">4</text>
<text x="515.74" y="1305.50" font-family="Liberation Sans" font-size="24.30" fill="#111">149,476</text>
<rect x="8" y="1326.0" width="620" height="53.7" fill="#fafbfd"/>
<rect x="8" y="1379.7" width="620" height="2" fill="#d9dcdf"/>
<rect x="33.1" y="1338.0" width="29.6" height="29.6" rx="4.5" fill="#fff" stroke="#7b8a8a" stroke-width="2"/>
<text x="88.06" y="1361.45" font-family="Liberation Sans" font-size="23.50" fill="#111">5</text>
<text x="515.74" y="1361.45" font-family="Liberation Sans" font-size="24.30" fill="#111">165,190</text>
<rect x="8" y="1435.5" width="620" height="2" fill="#d9dcdf"/>
<rect x="33.1" y="1393.8" width="29.6" height="29.6" rx="4.5" fill="#fff" stroke="#7b8a8a" stroke-width="2"/>
<text x="87.83" y="1417.20" font-family="Liberation Sans" font-size="23.50" fill="#111">6</text>
<text x="529.25" y="1417.20" font-family="Liberation Sans" font-size="24.30" fill="#111">88,848</text>
<rect x="8" y="1437.5" width="620" height="54.5" fill="#fafbfd"/>
<rect x="8" y="1492.0" width="620" height="2" fill="#d9dcdf"/>
<rect x="33.1" y="1450.0" width="29.6" height="29.6" rx="4.5" fill="#fff" stroke="#7b8a8a" stroke-width="2"/>
<text x="87.83" y="1473.35" font-family="Liberation Sans" font-size="23.50" fill="#111">7</text>
<text x="515.74" y="1473.35" font-family="Liberation Sans" font-size="24.30" fill="#111">159,146</text>
<rect x="8" y="1547.8" width="620" height="2" fill="#d9dcdf"/>
<rect x="33.1" y="1506.1" width="29.6" height="29.6" rx="4.5" fill="#fff" stroke="#7b8a8a" stroke-width="2"/>
<text x="88.06" y="1529.50" font-family="Liberation Sans" font-size="23.50" fill="#111">8</text>
<text x="515.98" y="1529.50" font-family="Liberation Sans" font-size="24.30" fill="#111">120,277</text>
<rect x="8" y="1549.8" width="620" height="52.2" fill="#fafbfd"/>
<rect x="8" y="1602.0" width="620" height="2" fill="#d9dcdf"/>
<rect x="33.1" y="1561.1" width="29.6" height="29.6" rx="4.5" fill="#fff" stroke="#7b8a8a" stroke-width="2"/>
<text x="88.06" y="1584.50" font-family="Liberation Sans" font-size="23.50" fill="#111">9</text>
<text x="515.74" y="1584.50" font-family="Liberation Sans" font-size="24.30" fill="#111">295,135</text>
<path d="M612,1663.75 H622.25 V1653.5" fill="none" stroke="#adadad" stroke-width="3.5"/>
<text x="650.35" y="962.70" font-family="Liberation Sans" font-size="32.44" fill="#000">Top Street Names</text>
<text x="825.78" y="1053.50" font-family="Liberation Sans" font-size="24.11" fill="#000" font-weight="bold">street_name</text>
<rect x="897" y="1145.0" width="543.8" height="2" fill="#cccccc"/>
<rect x="897" y="1193.1" width="543.8" height="2" fill="#cccccc"/>
<rect x="897" y="1241.1" width="543.8" height="2" fill="#cccccc"/>
<rect x="897" y="1289.2" width="543.8" height="2" fill="#cccccc"/>
<rect x="897" y="1337.2" width="543.8" height="2" fill="#cccccc"/>
<rect x="897" y="1385.2" width="543.8" height="2" fill="#cccccc"/>
<rect x="897" y="1433.3" width="543.8" height="2" fill="#cccccc"/>
<rect x="897" y="1481.3" width="543.8" height="2" fill="#cccccc"/>
<rect x="897" y="1529.4" width="543.8" height="2" fill="#cccccc"/>
<rect x="897" y="1097.0" width="543.8" height="2" fill="#cccccc"/>
<rect x="1004.8" y="1097" width="2" height="481.4" fill="#cccccc"/>
<rect x="1113.5" y="1097" width="2" height="481.4" fill="#cccccc"/>
<rect x="1222.3" y="1097" width="2" height="481.4" fill="#cccccc"/>
<rect x="1331.0" y="1097" width="2" height="481.4" fill="#cccccc"/>
<rect x="1439.8" y="1097" width="2" height="481.4" fill="#cccccc"/>
<rect x="897" y="1103.0" width="487.9" height="38" fill="#70237a"/>
<text x="798.32" y="1130.52" font-family="Liberation Sans" font-size="24.00" fill="#000">LAMAR</text>
<rect x="897" y="1151.0" width="333.7" height="38" fill="#432a84"/>
<text x="743.53" y="1178.56" font-family="Liberation Sans" font-size="24.00" fill="#000">CONGRESS</text>
<rect x="897" y="1199.1" width="324.1" height="38" fill="#4658a5"/>
<text x="836.39" y="1226.60" font-family="Liberation Sans" font-size="24.00" fill="#000">6TH</text>
<rect x="897" y="1247.1" width="288.5" height="38" fill="#5585bd"/>
<text x="840.15" y="1274.64" font-family="Liberation Sans" font-size="24.00" fill="#000">Null</text>
<rect x="897" y="1295.2" width="257.2" height="38" fill="#6aa0a9"/>
<text x="695.82" y="1322.68" font-family="Liberation Sans" font-size="24.00" fill="#000">CESAR CHAVEZ</text>
<rect x="897" y="1343.2" width="256.5" height="38" fill="#84b383"/>
<text x="751.52" y="1370.72" font-family="Liberation Sans" font-size="24.00" fill="#000">RIVERSIDE</text>
<rect x="897" y="1391.2" width="240.0" height="38" fill="#9fc06a"/>
<text x="750.30" y="1418.76" font-family="Liberation Sans" font-size="24.00" fill="#000">IH 35 SVRD</text>
<rect x="897" y="1439.3" width="238.3" height="38" fill="#bac05d"/>
<text x="713.02" y="1466.80" font-family="Liberation Sans" font-size="24.00" fill="#000">RUTHERFORD</text>
<rect x="897" y="1487.3" width="203.0" height="38" fill="#d3b351"/>
<text x="836.48" y="1514.84" font-family="Liberation Sans" font-size="24.00" fill="#000">1ST</text>
<rect x="897" y="1535.4" width="193.8" height="38" fill="#dc9648"/>
<text x="836.39" y="1562.88" font-family="Liberation Sans" font-size="24.00" fill="#000">5TH</text>
<rect x="887" y="1097.0" width="10" height="2" fill="#000"/>
<rect x="887" y="1145.0" width="10" height="2" fill="#000"/>
<rect x="887" y="1193.1" width="10" height="2" fill="#000"/>
<rect x="887" y="1241.1" width="10" height="2" fill="#000"/>
<rect x="887" y="1289.2" width="10" height="2" fill="#000"/>
<rect x="887" y="1337.2" width="10" height="2" fill="#000"/>
<rect x="887" y="1385.2" width="10" height="2" fill="#000"/>
<rect x="887" y="1433.3" width="10" height="2" fill="#000"/>
<rect x="887" y="1481.3" width="10" height="2" fill="#000"/>
<rect x="887" y="1529.4" width="10" height="2" fill="#000"/>
<rect x="887" y="1577.4" width="10" height="2" fill="#000"/>
<rect x="895.5" y="1097" width="3" height="482.9" fill="#000"/>
<rect x="895.5" y="1576.9" width="546.8" height="3" fill="#000"/>
<rect x="896.0" y="1578.4" width="2" height="7.5" fill="#000"/>
<text x="890.67" y="1607.60" font-family="Liberation Sans" font-size="23.00" fill="#000">0</text>
<rect x="1004.8" y="1578.4" width="2" height="7.5" fill="#000"/>
<text x="993.04" y="1607.60" font-family="Liberation Sans" font-size="23.00" fill="#000">5k</text>
<rect x="1113.5" y="1578.4" width="2" height="7.5" fill="#000"/>
<text x="1095.06" y="1607.60" font-family="Liberation Sans" font-size="23.00" fill="#000">10k</text>
<rect x="1222.3" y="1578.4" width="2" height="7.5" fill="#000"/>
<text x="1203.82" y="1607.60" font-family="Liberation Sans" font-size="23.00" fill="#000">15k</text>
<rect x="1331.0" y="1578.4" width="2" height="7.5" fill="#000"/>
<text x="1312.81" y="1607.60" font-family="Liberation Sans" font-size="23.00" fill="#000">20k</text>
<rect x="1439.8" y="1578.4" width="2" height="7.5" fill="#000"/>
<text x="1421.57" y="1607.60" font-family="Liberation Sans" font-size="23.00" fill="#000">25k</text>
<text x="1095.92" y="1647.90" font-family="Liberation Sans" font-size="23.60" fill="#000" font-weight="bold">Transactions</text>
<path d="M1452,1663.75 H1462.25 V1653.5" fill="none" stroke="#adadad" stroke-width="3.5"/>
<text x="1492.33" y="961.70" font-family="Liberation Sans" font-size="33.25" fill="#000">Top Complaints</text>
<text x="1807.60" y="1000.00" font-family="Liberation Sans" font-size="21.92" fill="#e0913d">Graffiti Abatement</text>
<text x="2026.34" y="1001.70" font-family="Liberation Sans" font-size="21.99" fill="#4b7fc0">Found Animal - Pick Up</text>
<text x="2288.60" y="1009.70" font-family="Liberation Sans" font-size="19.72" fill="#80b07a">Water Theft Report</text>
<text x="1810.76" y="1032.00" font-family="Liberation Sans" font-size="21.90" fill="#8fb96a">Traffic Signal - Dig Tess Request</text>
<text x="2172.21" y="1037.80" font-family="Liberation Sans" font-size="19.92" fill="#5d9ea8">Loose Animal Not Dog</text>
<text x="1796.40" y="1069.60" font-family="Liberation Sans" font-size="19.98" fill="#3a2a80">ARR - Brush</text>
<text x="1939.34" y="1066.20" font-family="Liberation Sans" font-size="23.98" fill="#5d9ea8">Sign - Traffic Sign Maintenance</text>
<text x="1802.80" y="1095.70" font-family="Liberation Sans" font-size="23.81" fill="#e0913d">APD - Vehicle Abatement Report</text>
<text x="2205.90" y="1097.80" font-family="Liberation Sans" font-size="19.91" fill="#3d55a0">Austin Code - Coronavirus</text>
<text x="1796.90" y="1129.50" font-family="Liberation Sans" font-size="25.98" fill="#4b7fc0">APD - Non Emergency Noise/Alarm</text>
<text x="2243.90" y="1127.80" font-family="Liberation Sans" font-size="19.92" fill="#80b07a">Standing Water</text>
<text x="1899.80" y="1159.90" font-family="Liberation Sans" font-size="27.87" fill="#6a2a85">ATD - Parking Violation Enforcement</text>
<text x="1792.98" y="1189.40" font-family="Liberation Sans" font-size="24.01" fill="#b5bc5a">Loud Commercial Music</text>
<text x="2082.60" y="1185.20" font-family="Liberation Sans" font-size="23.94" fill="#cc3333">Code Compliance</text>
<text x="1756.80" y="1214.10" font-family="Liberation Sans" font-size="21.85" fill="#cc3a2a">Animal Bite</text>
<text x="1959.10" y="1222.00" font-family="Liberation Sans" font-size="27.82" fill="#dd6a35">ARR Missed Yard Trimmings/Compost</text>
<text x="1684.08" y="1265.90" font-family="Liberation Sans" font-size="46.11" fill="#3b2a85">Traffic Signal - Maintenance</text>
<text x="2283.30" y="1267.60" font-family="Liberation Sans" font-size="20.04" fill="#5d9ea8">Curb/Gutter Repair</text>
<text x="1706.12" y="1293.30" font-family="Liberation Sans" font-size="21.88" fill="#8fb96a">Sign - New</text>
<text x="1901.70" y="1299.60" font-family="Liberation Sans" font-size="33.75" fill="#5d9ea8">Animal Control - Assistance Request</text>
<text x="2089.21" y="1353.60" font-family="Liberation Sans" font-size="19.91" fill="#cc3a2a">Bat Complaint</text>
<text x="2087.20" y="1377.70" font-family="Liberation Sans" font-size="20.01" fill="#e0913d">ARR - General</text>
<text x="1630.30" y="1397.60" font-family="Liberation Sans" font-size="19.98" fill="#dd5a2a">Dockless Mobility</text>
<text x="2085.44" y="1407.40" font-family="Liberation Sans" font-size="22.04" fill="#5d9ea8">Loud Music</text>
<text x="1651.99" y="1424.10" font-family="Liberation Sans" font-size="20.13" fill="#3d55a0">Bridge Repair</text>
<text x="2092.90" y="1447.70" font-family="Liberation Sans" font-size="19.88" fill="#80b07a">Street Lights New</text>
<text x="2085.00" y="1479.60" font-family="Liberation Sans" font-size="23.91" fill="#dd6a35">ARR - Recycling</text>
<text x="1603.60" y="1485.20" font-family="Liberation Sans" font-size="21.93" fill="#dd5a2a">Wildlife Exposure</text>
<text x="2080.10" y="1507.80" font-family="Liberation Sans" font-size="20.03" fill="#6a2a85">Bicycle Issues</text>
<text x="1550.22" y="1513.60" font-family="Liberation Sans" font-size="21.91" fill="#3a2a80">Obstruction in ROW</text>
<text x="1527.40" y="1546.00" font-family="Liberation Sans" font-size="31.95" fill="#b5bc5a">ARR - Storm Debris Collection</text>
<text x="1626.43" y="1583.90" font-family="Liberation Sans" font-size="31.77" fill="#d4b040">Street Light Issue- Address</text>
<text x="2099.70" y="1601.00" font-family="Liberation Sans" font-size="23.93" fill="#80b07a">ACD - Request Code Officer</text>
<text x="1614.00" y="1617.80" font-family="Liberation Sans" font-size="29.99" fill="#e0913d">Park Maintenance - Grounds</text>
<text x="1971.54" y="1641.10" font-family="Liberation Sans" font-size="22.01" fill="#d4b040">Parking Violation Enforcement</text>
<text x="1603.10" y="1648.00" font-family="Liberation Sans" font-size="25.83" fill="#5d9ea8">ATD - Shared Micromobility</text>
<text transform="translate(1515.90,1108.20) rotate(90)" font-family="Liberation Sans" font-size="21.89" fill="#b5bc5a">ARR Missed Yard Trimmings /Organics</text>
<text transform="translate(1553.80,1072.29) rotate(90)" font-family="Liberation Sans" font-size="23.91" fill="#4b7fc0">Public Health - Graffiti Abatement</text>
<text transform="translate(1593.70,1104.50) rotate(90)" font-family="Liberation Sans" font-size="23.92" fill="#d4b040">APD - Non Emergency Collision</text>
<text transform="translate(1629.90,1002.20) rotate(90)" font-family="Liberation Sans" font-size="33.84" fill="#4b7fc0">ARR Missed Recycling</text>
<text transform="translate(1685.60,994.80) rotate(90)" font-family="Liberation Sans" font-size="23.88" fill="#3d55a0">Water Waste Report</text>
<text transform="translate(1720.00,1043.46) rotate(90)" font-family="Liberation Sans" font-size="27.95" fill="#3a2a80">Pothole Repair</text>
<text transform="translate(1751.70,1004.68) rotate(90)" font-family="Liberation Sans" font-size="24.05" fill="#8fb96a">Debris in Street</text>
<text transform="translate(1801.10,1331.80) rotate(90)" font-family="Liberation Sans" font-size="25.84" fill="#3d55a0">ARR - Compost</text>
<text transform="translate(1840.00,1286.10) rotate(90)" font-family="Liberation Sans" font-size="27.92" fill="#cc3333">ARR - Garbage</text>
<text transform="translate(1872.30,1306.35) rotate(90)" font-family="Liberation Sans" font-size="41.91" fill="#3d55a0">Loose Dog</text>
<text transform="translate(1933.80,1311.78) rotate(90)" font-family="Liberation Sans" font-size="25.84" fill="#80b07a">Tree Issue ROW</text>
<text transform="translate(1961.60,1314.14) rotate(90)" font-family="Liberation Sans" font-size="21.97" fill="#5d9ea8">311 CC - Other</text>
<text transform="translate(1993.80,1318.20) rotate(90)" font-family="Liberation Sans" font-size="23.86" fill="#6a2a85">Animal - Proper Care</text>
<text transform="translate(2023.20,1357.55) rotate(90)" font-family="Liberation Sans" font-size="21.87" fill="#6a2a85">DSD - Follow-Up</text>
<text transform="translate(2049.70,1312.84) rotate(90)" font-family="Liberation Sans" font-size="31.83" fill="#80b07a">Injured / Sick Animal</text>
<text transform="translate(2239.90,1317.10) rotate(90)" font-family="Liberation Sans" font-size="19.84" fill="#80b07a">ARR - Bulk</text>
<text transform="translate(2275.60,1328.90) rotate(90)" font-family="Liberation Sans" font-size="23.84" fill="#3a2a80">ARR Brush and Bulk</text>
<text transform="translate(2313.30,1314.44) rotate(90)" font-family="Liberation Sans" font-size="21.98" fill="#3d55a0">Parking Machine Issue</text>
<text transform="translate(2351.80,1318.72) rotate(90)" font-family="Liberation Sans" font-size="22.03" fill="#80b07a">Sidewalk Repair</text>
<text transform="translate(2383.50,1325.52) rotate(90)" font-family="Liberation Sans" font-size="21.90" fill="#e0913d">Shared Micromobility</text>
<text transform="translate(2427.60,1328.84) rotate(90)" font-family="Liberation Sans" font-size="21.95" fill="#d4b040">Found Animal Report - Keep</text>
<text transform="translate(2475.90,1001.20) rotate(90)" font-family="Liberation Sans" font-size="31.85" fill="#8fb96a">ARR Dead Animal Collection</text>
<text transform="translate(2465.10,1445.24) rotate(90)" font-family="Liberation Sans" font-size="22.02" fill="#3a2a80">Pavement Failure</text>
<circle cx="2442.3" cy="1675.3" r="39.5" fill="#3a78c9"/>
<rect x="2424.5" y="1657.6" width="35.5" height="30" rx="5" fill="#fff"/>
<rect x="2440.3" y="1666" width="2.5" height="20" fill="#3a78c9"/>
<path d="M2504,1663.75 H2514.25 V1653.5" fill="none" stroke="#adadad" stroke-width="3.5"/>
<rect x="1977.8" y="103.8" width="208.2" height="70.7" rx="5" fill="#222"/>
<path d="M2065.8,104.5 L2081.8,92 L2097.8,104.5 Z" fill="#222"/>
<text x="2018.32" y="149.00" font-family="Liberation Sans" font-size="26.43" fill="#fff">Import app</text>
</svg>
</body></html>
